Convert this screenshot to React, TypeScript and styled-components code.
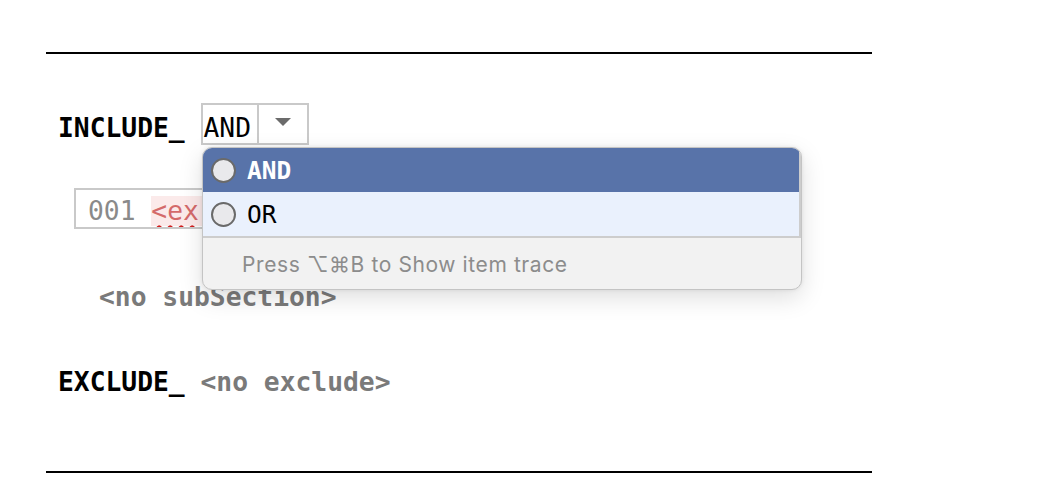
import React from "react";
import styled, { createGlobalStyle } from "styled-components";

const Global = createGlobalStyle`
  html, body { margin: 0; padding: 0; background: #ffffff; }
  body { width: 1052px; height: 482px; overflow: hidden; }
`;

const mono = `"DejaVu Sans Mono", "Liberation Mono", monospace`;

const Page = styled.div`
  position: relative;
  padding: 52px 0 0 46px;
  width: 826px;
  font-family: ${mono};
  font-size: 26.3px;
  color: #000;
`;

const Rule = styled.div`
  height: 2px;
  background: #000;
  width: 826px;
`;

const Editor = styled.div`
  display: flex;
  flex-direction: column;
  padding-left: 12px;
`;

const Line = styled.div<{ $top: number; $indent?: number; $h?: number; $baseline?: boolean }>`
  display: flex;
  align-items: ${(p) => (p.$baseline ? "baseline" : "center")};
  margin-top: ${(p) => p.$top}px;
  padding-left: ${(p) => p.$indent ?? 0}px;
  height: ${(p) => p.$h ?? 30}px;
  white-space: pre;
`;

const Keyword = styled.span`
  font-weight: 700;
  color: #000;
`;

const Placeholder = styled.span`
  font-weight: 700;
  color: #7a7a7a;
`;

const Combo = styled.div`
  display: flex;
  align-items: stretch;
  height: 42px;
  border: 2px solid #c9c9c9;
  box-sizing: border-box;
`;

const ComboValue = styled.span`
  display: block;
  padding: 8px 6px 0 1px;
  line-height: 30px;
  border-right: 2px solid #c9c9c9;
`;

const ComboArrow = styled.span`
  width: 48px;
  display: flex;
  align-items: center;
  justify-content: center;
  padding-bottom: 4px;
`;

const Field = styled.div`
  display: flex;
  align-items: center;
  height: 41px;
  width: 140px;
  box-sizing: border-box;
  border: 2px solid #c9c9c9;
  padding: 4px 0 0 12px;
  overflow: hidden;
`;

const Num = styled.span`
  color: #8a8a8a;
`;

const ErrText = styled.span`
  color: #d46a6a;
  background: #fbeaea;
  text-decoration: underline wavy #d11c1c;
  text-decoration-thickness: 1.5px;
  text-underline-offset: 5px;
  padding-right: 20px;
`;

const Popup = styled.div`
  position: absolute;
  left: 202px;
  top: 147px;
  width: 600px;
  height: 143px;
  box-sizing: border-box;
  background: #f2f2f2;
  border: 1px solid #c4c4c4;
  border-radius: 10px;
  box-shadow: 0 8px 24px rgba(0, 0, 0, 0.13), 0 0 4px rgba(0, 0, 0, 0.08);
  overflow: hidden;
  display: flex;
  flex-direction: column;
`;

const List = styled.div`
  display: flex;
  flex-direction: column;
  border-right: 2px solid #cdcdcd;
  border-bottom: 2px solid #cdcdcd;
`;

const Item = styled.div<{ $selected?: boolean }>`
  display: flex;
  align-items: center;
  gap: 11px;
  height: 44px;
  padding-left: 8px;
  background: ${(p) => (p.$selected ? "#5873a9" : "#eaf1fd")};
  color: ${(p) => (p.$selected ? "#ffffff" : "#000000")};
  font-family: ${mono};
  font-size: 24.5px;
  font-weight: ${(p) => (p.$selected ? 700 : 400)};
`;

const Radio = styled.span`
  width: 25px;
  height: 25px;
  box-sizing: border-box;
  border-radius: 50%;
  border: 2px solid #6a6a6a;
  background: #e9e9ec;
  flex: none;
`;

const Footer = styled.div`
  flex: 1;
  display: flex;
  align-items: center;
  padding-left: 39px;
  padding-top: 2px;
  font-family: "Inter", "Noto Sans", "DejaVu Sans", sans-serif;
  font-size: 21px;
  letter-spacing: 0.6px;
  color: #8c8c8c;
`;

export default function App() {
  return (
    <>
      <Global />
      <Page>
        <Rule />
        <Editor>
          <Line $top={49} $h={42} $baseline>
            <Keyword>INCLUDE_ </Keyword>
            <Combo>
              <ComboValue>AND</ComboValue>
              <ComboArrow>
                <svg width="16" height="8" viewBox="0 0 16 8">
                  <path d="M0 0 L16 0 L8 8 Z" fill="#6b6b6b" />
                </svg>
              </ComboArrow>
            </Combo>
          </Line>
          <Line $top={43} $indent={16} $h={41}>
            <Field>
              <Num>001 </Num>
              <ErrText>&lt;ex</ErrText>
            </Field>
          </Line>
          <Line $top={53} $indent={41}>
            <Placeholder>&lt;no subSection&gt;</Placeholder>
          </Line>
          <Line $top={55}>
            <Keyword>EXCLUDE_ </Keyword>
            <Placeholder>&lt;no exclude&gt;</Placeholder>
          </Line>
        </Editor>
        <Line $top={74} $h={2}>
          <Rule />
        </Line>
        <Popup>
          <List>
            <Item $selected>
              <Radio />
              AND
            </Item>
            <Item>
              <Radio />
              OR
            </Item>
          </List>
          <Footer>Press ⌥⌘B to Show item trace</Footer>
        </Popup>
      </Page>
    </>
  );
}
